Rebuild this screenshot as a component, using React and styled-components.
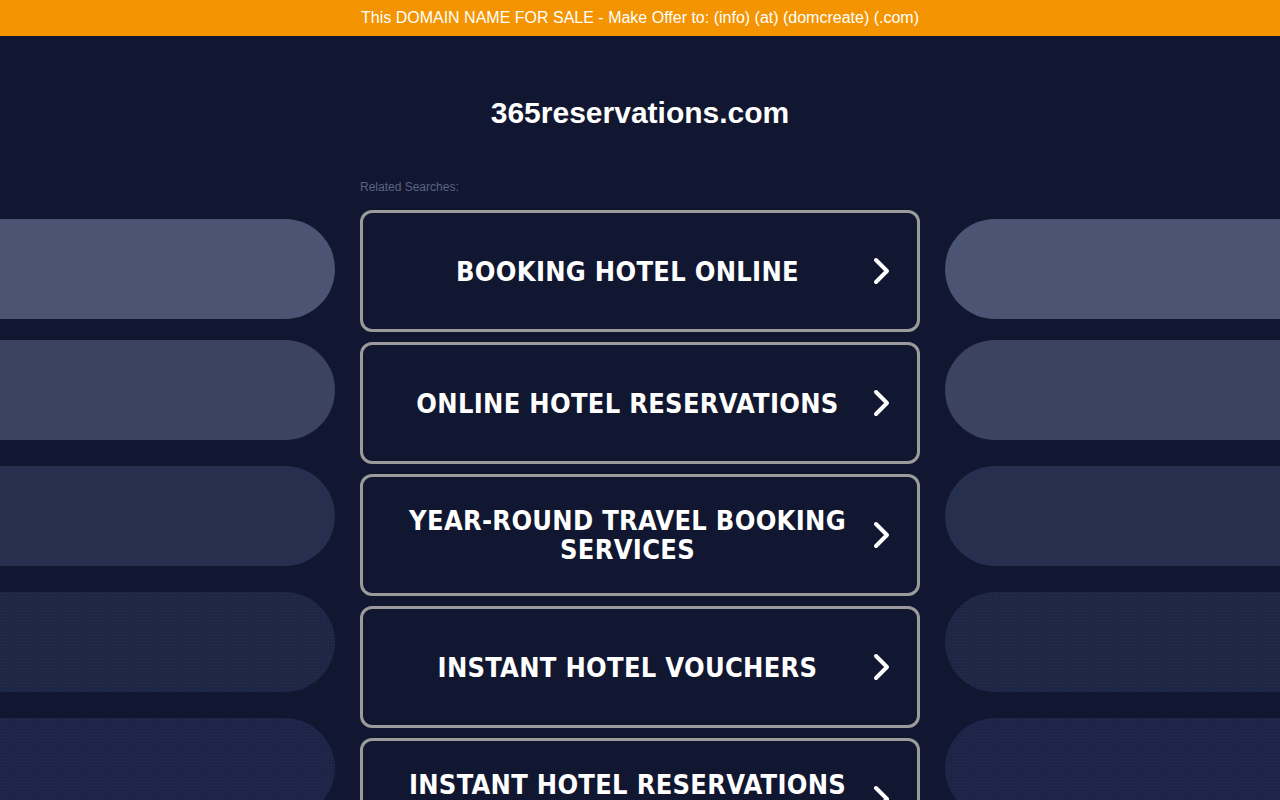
import React from "react";
import styled, { createGlobalStyle } from "styled-components";

const Global = createGlobalStyle`
  html, body { margin: 0; padding: 0; }
  body {
    background: #111730;
    font-family: "Liberation Sans", Arial, sans-serif;
    overflow: hidden;
  }
`;

const Page = styled.div`
  width: 1280px;
  height: 800px;
  overflow: hidden;
  background: #111730;
`;

const Banner = styled.div`
  height: 36px;
  background: #f39400;
  color: #ffffff;
  font-size: 16px;
  line-height: 36px;
  text-align: center;
`;

const Header = styled.header`
  padding-top: 59px;
  text-align: center;
`;

const Title = styled.h1`
  margin: 0;
  color: #ffffff;
  font-family: "Liberation Sans", Arial, sans-serif;
  font-weight: 700;
  font-size: 30px;
  line-height: 36px;
`;

const Main = styled.main`
  margin-top: 39px;
  display: grid;
  grid-template-columns: 1fr 560px 1fr;
  column-gap: 25px;
`;

const PillColumn = styled.div`
  padding-top: 49px;
  display: flex;
  flex-direction: column;
`;

const Pill = styled.div`
  height: 100px;
  flex: none;
  margin-top: ${(p) => p.$gap}px;
  background-color: ${(p) => p.$color};
  background-image: ${(p) =>
    p.$dots
      ? "radial-gradient(rgba(255,255,255,0.04) 0.6px, transparent 0.9px)"
      : "none"};
  background-size: 3px 3px;
  border-radius: ${(p) => (p.$side === "left" ? "0 50px 50px 0" : "50px 0 0 50px")};
`;

const Center = styled.div`
  display: flex;
  flex-direction: column;
`;

const Label = styled.div`
  margin-top: 9px;
  font-size: 12px;
  line-height: 16px;
  color: #5a6286;
`;

const List = styled.div`
  margin-top: 15px;
  display: flex;
  flex-direction: column;
  gap: 10px;
`;

const Button = styled.a`
  box-sizing: border-box;
  height: 122px;
  border: 3px solid #9b9b9b;
  border-radius: 12px;
  background: #111730;
  display: flex;
  align-items: center;
  padding: 0 20px 0 25px;
  text-decoration: none;
  cursor: pointer;
`;

const ButtonText = styled.span`
  flex: 1;
  text-align: center;
  color: #ffffff;
  font-family: "DejaVu Sans Condensed", "DejaVu Sans", Tahoma, sans-serif;
  font-weight: 700;
  font-size: 27px;
  line-height: 29px;
  letter-spacing: 0.3px;
`;

const Chevron = styled.span`
  width: 30px;
  flex: none;
  display: flex;
  justify-content: center;
  align-items: center;
`;

const ChevronIcon = () => (
  <svg width="18" height="28" viewBox="0 0 18 28" fill="none">
    <path
      d="M3 3 L14 14 L3 25"
      stroke="#ffffff"
      strokeWidth="4"
      strokeLinecap="round"
      strokeLinejoin="round"
    />
  </svg>
);

const pills = [
  { color: "#4b5472", gap: 0 },
  { color: "#3b4361", gap: 21 },
  { color: "#262f4e", gap: 26 },
  { color: "#1e2646", gap: 26, dots: true },
  { color: "#1c2547", gap: 26, dots: true },
];

const searches = [
  "BOOKING HOTEL ONLINE",
  "ONLINE HOTEL RESERVATIONS",
  "YEAR-ROUND TRAVEL BOOKING SERVICES",
  "INSTANT HOTEL VOUCHERS",
  "INSTANT HOTEL RESERVATIONS ONLINE",
];

export default function App() {
  return (
    <Page>
      <Global />
      <Banner>This DOMAIN NAME FOR SALE - Make Offer to: (info) (at) (domcreate) (.com)</Banner>
      <Header>
        <Title>365reservations.com</Title>
      </Header>
      <Main>
        <PillColumn>
          {pills.map((p, i) => (
            <Pill key={i} $side="left" $color={p.color} $gap={p.gap} $dots={p.dots} />
          ))}
        </PillColumn>
        <Center>
          <Label>Related Searches:</Label>
          <List>
            {searches.map((s) => (
              <Button key={s}>
                <ButtonText>{s}</ButtonText>
                <Chevron>
                  <ChevronIcon />
                </Chevron>
              </Button>
            ))}
          </List>
        </Center>
        <PillColumn>
          {pills.map((p, i) => (
            <Pill key={i} $side="right" $color={p.color} $gap={p.gap} $dots={p.dots} />
          ))}
        </PillColumn>
      </Main>
    </Page>
  );
}
